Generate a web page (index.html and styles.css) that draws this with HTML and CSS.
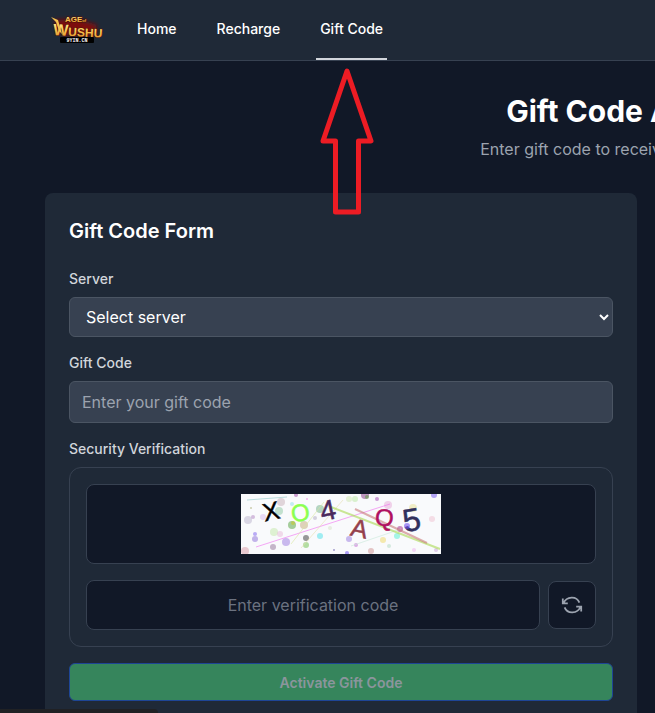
FILE: index.html
```html
<!DOCTYPE html>
<html lang="en">
    <head>
        <meta charset="utf-8">
        <title>Gift Code</title>
        <link rel="stylesheet" href="styles.css">
    </head>
    <body>
        <header class="navbar">
            <a class="logo" href="#" aria-label="Age of Wushu">
                <svg width="56" height="32" viewBox="0 0 56 32">
                    <defs>
                        <linearGradient id="gold" x1="0" y1="0" x2="0" y2="1">
                            <stop offset="0" stop-color="#fff0a0"/>
                            <stop offset="0.5" stop-color="#f8c552"/>
                            <stop offset="1" stop-color="#e08a26"/>
                        </linearGradient>
                        <filter id="glow" x="-20%" y="-30%" width="140%" height="160%">
                            <feGaussianBlur stdDeviation="2"/>
                        </filter>
                    </defs>
                    <path d="M5 6 L28 5 L48 11 L46 21 L14 21 Z" fill="#7d0d10" filter="url(#glow)"/>
                    <g class="logo-text" fill="url(#gold)" stroke="#4a1205" stroke-width="1" paint-order="stroke">
                        <text x="16" y="8" font-size="8">AGE<tspan font-size="4">of</tspan></text>
                        <text x="4" y="21" font-size="16" transform="rotate(3 4 21)">W<tspan font-size="12">USHU</tspan></text>
                    </g>
                    <path d="M2 3 L9 6 L13 20 L10 17 L7 8 Z" fill="#f7c34f"/>
                    <rect x="11" y="23" width="34" height="6" rx="1" fill="#000"/>
                    <text class="logo-site" x="28" y="28" font-size="5" text-anchor="middle" fill="#fff">9YIN.CN</text>
                </svg>
            </a>
            <nav class="nav-links">
                <a href="#">Home</a>
                <a href="#">Recharge</a>
                <a class="active" href="#">Gift Code</a>
            </nav>
        </header>

        <main class="page">
            <div class="page-title">
                <h1>Gift Code Activation</h1>
                <p>Enter gift code to receive great game rewards</p>
            </div>

            <div class="columns">
                <form class="card">
                    <h2>Gift Code Form</h2>

                    <label for="server">Server</label>
                    <select id="server">
                        <option>Select server</option>
                    </select>

                    <label for="gift-code">Gift Code</label>
                    <input class="text-input" id="gift-code" type="text" placeholder="Enter your gift code">

                    <label for="captcha">Security Verification</label>
                    <div class="verify">
                        <div class="captcha-box">
                            <svg width="200" height="60" viewBox="0 0 200 60">
                                <rect width="200" height="60" fill="#f9fafc"/>
                                <g fill-opacity="0.5">
                                    <circle cx="7" cy="26" r="4" fill="#b9b2cc"/>
                                    <circle cx="4" cy="57" r="4" fill="#d99aa5"/>
                                    <circle cx="14" cy="40" r="2" fill="#7a5cf0"/>
                                    <circle cx="14" cy="45" r="3" fill="#8a6bd8"/>
                                    <circle cx="32" cy="53" r="3" fill="#8f6f95"/>
                                    <circle cx="33" cy="38" r="4" fill="#c4e8a8"/>
                                    <circle cx="39" cy="40" r="3" fill="#e8b8d8"/>
                                    <circle cx="45" cy="48" r="4" fill="#9a78e0"/>
                                    <circle cx="51" cy="31" r="4" fill="#4fa03a"/>
                                    <circle cx="63" cy="31" r="4" fill="#c4a878"/>
                                    <circle cx="65" cy="44" r="3" fill="#333"/>
                                    <circle cx="65" cy="51" r="3" fill="#6cc048"/>
                                    <circle cx="79" cy="42" r="3" fill="#48e0e8"/>
                                    <circle cx="79" cy="15" r="4" fill="#70b088"/>
                                    <circle cx="74" cy="24" r="2" fill="#b0a8c0"/>
                                    <circle cx="66" cy="5" r="1" fill="#f070e0"/>
                                    <circle cx="22" cy="23" r="3" fill="#d8b8f0"/>
                                    <circle cx="38" cy="17" r="4" fill="#8cc8a0"/>
                                    <circle cx="40" cy="8" r="4" fill="#c8b0b8"/>
                                    <circle cx="51" cy="10" r="2" fill="#90e0e8"/>
                                    <circle cx="10" cy="14" r="1" fill="#a0a060"/>
                                    <circle cx="55" cy="1" r="2" fill="#9a40a0"/>
                                    <circle cx="108" cy="5" r="3" fill="#d0e8b0"/>
                                    <circle cx="114" cy="5" r="3" fill="#b8e8a0"/>
                                    <circle cx="124" cy="1" r="4" fill="#803080"/>
                                    <circle cx="126" cy="3" r="2" fill="#50a030"/>
                                    <circle cx="136" cy="5" r="2" fill="#a040b0"/>
                                    <circle cx="147" cy="11" r="4" fill="#e8a8d8"/>
                                    <circle cx="193" cy="1" r="3" fill="#7050f0"/>
                                    <circle cx="172" cy="14" r="4" fill="#e8e090"/>
                                    <circle cx="191" cy="25" r="3" fill="#f0c0d0"/>
                                    <circle cx="108" cy="45" r="3" fill="#9878e0"/>
                                    <circle cx="106" cy="59" r="2" fill="#6040f0"/>
                                    <circle cx="115" cy="51" r="2" fill="#c060d0"/>
                                    <circle cx="130" cy="57" r="3" fill="#d09090"/>
                                    <circle cx="142" cy="46" r="3" fill="#f0d860"/>
                                    <circle cx="148" cy="52" r="2" fill="#b0d8c0"/>
                                    <circle cx="156" cy="42" r="3" fill="#50f0d0"/>
                                    <circle cx="159" cy="35" r="3" fill="#a02080"/>
                                    <circle cx="173" cy="56" r="2" fill="#f0b0f0"/>
                                    <circle cx="195" cy="56" r="2" fill="#c8a0d8"/>
                                    <circle cx="93" cy="56" r="1" fill="#5040a0"/>
                                    <circle cx="12" cy="23" r="2" fill="#b080c0"/>
                                    <circle cx="89" cy="34" r="2" fill="#d8e0c8"/>
                                </g>
                                <g fill="none" stroke-opacity="0.6">
                                    <path d="M6 6 L46 3" stroke="#90c8c8"/>
                                    <path d="M15 53 L149 10" stroke="#f070f0"/>
                                    <path d="M50 50 L83 8" stroke="#d8e8a0"/>
                                    <path d="M60 54 L102 6" stroke="#e8e0b0"/>
                                    <path d="M110 52 L160 35" stroke="#c8e8d8"/>
                                    <path d="M90 13 L199 55" stroke="#a8d850" stroke-width="2"/>
                                    <path d="M114 15 L186 49" stroke="#c87878" stroke-width="2"/>
                                </g>
                                <g class="captcha-text">
                                    <text x="22" y="26" font-size="25" fill="#000" stroke="#000" transform="rotate(-12 30 18)">X</text>
                                    <text x="50" y="27" font-size="24" fill="#8cff50" stroke="#8cff50" transform="rotate(-8 60 19)">O</text>
                                    <text x="79" y="26" font-size="28" fill="#4b2a5c" stroke="#4b2a5c" transform="rotate(-12 86 16)">4</text>
                                    <text x="110" y="43" font-size="25" fill="#94404c" stroke="#94404c" transform="rotate(12 118 35)">A</text>
                                    <text x="134" y="32" font-size="24" fill="#b01060" stroke="#b01060" transform="rotate(4 143 24)">Q</text>
                                    <text x="162" y="37" font-size="32" fill="#30305c" stroke="#30305c" transform="rotate(-10 170 27)">5</text>
                                </g>
                                <circle cx="166" cy="32" r="3" fill="#7050f0" fill-opacity="0.6"/>
                                <circle cx="52" cy="29" r="2" fill="#c8c830" fill-opacity="0.6"/>
                            </svg>
                        </div>
                        <div class="captcha-row">
                            <input id="captcha" type="text" placeholder="Enter verification code">
                            <button class="refresh" type="button" aria-label="Refresh code">
                                <svg width="24" height="24" viewBox="0 0 24 24" fill="none" stroke="#9ca3af" stroke-width="1.8">
                                    <path d="M2.8 5.5 V10.4 H7.8 M3.6 10 C6.5 3.2 16.5 2.4 19.4 9.6"/>
                                    <path d="M21.2 18.5 V13.6 H16.2 M20.4 14 C17.5 20.8 7.5 21.6 4.6 14.4"/>
                                </svg>
                            </button>
                        </div>
                    </div>

                    <button class="submit" type="submit" disabled>Activate Gift Code</button>
                </form>
            </div>

            <svg class="arrow" width="54" height="150" viewBox="0 0 54 150">
                <path d="M27 5 L51 75 H38.5 V146 H15.5 V75 H3 Z"/>
            </svg>
        </main>
        <div class="status-bar"></div>
    </body>
</html>
```

FILE: styles.css
```css
* {
    box-sizing: border-box;
}
body {
    margin: 0;
    background-color: #111827;
    color: white;
    font-family: Inter, "Liberation Sans", sans-serif;
    font-size: 16px;
    line-height: 24px;
    overflow-x: hidden;
}
h1, h2, p {
    margin: 0;
}
input, select, button {
    font-family: inherit;
    font-size: 16px;
}
.navbar {
    display: flex;
    gap: 28px;
    height: 61px;
    padding-left: 49px;
    background-color: #1f2937;
    border-bottom: 1px solid #374151;
}
.logo {
    display: flex;
    align-items: center;
}
.logo-text {
    font-family: "Liberation Sans", sans-serif;
    font-weight: bold;
}
.logo-site {
    font-family: "Liberation Mono", monospace;
    font-weight: bold;
}
.nav-links {
    display: flex;
    gap: 32px;
}
.nav-links a {
    display: flex;
    align-items: center;
    padding: 0 4px;
    border-bottom: 2px solid transparent;
    color: white;
    font-size: 14px;
    font-weight: 500;
    text-decoration: none;
}
.nav-links .active {
    border-bottom-color: #d1d5db;
}
.page {
    position: relative;
    padding: 32px 45px;
    overflow: hidden;
}
/* the content keeps its desktop width and runs off narrow windows */
.page-title, .columns {
    width: 1216px;
}
.page-title {
    margin-bottom: 32px;
    text-align: center;
}
.page-title h1 {
    margin-bottom: 8px;
    font-size: 30px;
    font-weight: 700;
    line-height: 36px;
}
.page-title p {
    color: #9ca3af;
}
.columns {
    display: grid;
    grid-template-columns: 1fr 1fr;
    gap: 32px;
}
.card {
    padding: 24px;
    background-color: #1f2937;
    border-radius: 8px;
}
.card h2 {
    margin-bottom: 24px;
    font-size: 20px;
    font-weight: 600;
    line-height: 28px;
}
.card label {
    display: block;
    margin-bottom: 8px;
    color: #d1d5db;
    font-size: 14px;
    font-weight: 500;
    line-height: 20px;
}
.card select, .text-input {
    display: block;
    width: 100%;
    margin-bottom: 16px;
    background-color: #374151;
    border: 1px solid #4b5563;
    border-radius: 6px;
    color: white;
}
.card select {
    height: 40px;
    padding: 0 12px;
}
.text-input {
    height: 42px;
    padding: 0 12px;
}
.text-input::placeholder {
    color: #9ca3af;
}
.verify {
    display: flex;
    flex-direction: column;
    gap: 16px;
    margin-bottom: 16px;
    padding: 16px;
    border: 1px solid #374151;
    border-radius: 12px;
}
.captcha-box {
    display: flex;
    align-items: center;
    justify-content: center;
    height: 80px;
    background-color: #111827;
    border: 1px solid #374151;
    border-radius: 8px;
}
.captcha-text {
    font-family: "Liberation Sans", sans-serif;
    stroke-width: 0.5px;
}
.captcha-row {
    display: flex;
    align-items: center;
    gap: 8px;
}
.captcha-row input {
    flex: 1;
    height: 50px;
    background-color: #111827;
    border: 1px solid #374151;
    border-radius: 8px;
    color: white;
    text-align: center;
}
.captcha-row input::placeholder {
    color: #6b7280;
}
.refresh {
    display: flex;
    align-items: center;
    justify-content: center;
    width: 48px;
    height: 48px;
    padding: 0;
    background-color: #111827;
    border: 1px solid #374151;
    border-radius: 8px;
}
.submit {
    display: block;
    width: 100%;
    height: 38px;
    background-color: #36855c;
    border: 1px solid #1e4596;
    border-radius: 6px;
    color: #8b959c;
    font-size: 14px;
    font-weight: 600;
}
.arrow {
    position: absolute;
    top: 5px;
    left: 320px;
    fill: none;
    stroke: #ed1c24;
    stroke-width: 5;
    stroke-linejoin: round;
}
.status-bar {
    position: fixed;
    bottom: 0;
    left: 0;
    width: 158px;
    height: 4px;
    background-color: #202124;
    border-top-right-radius: 4px;
}
```
